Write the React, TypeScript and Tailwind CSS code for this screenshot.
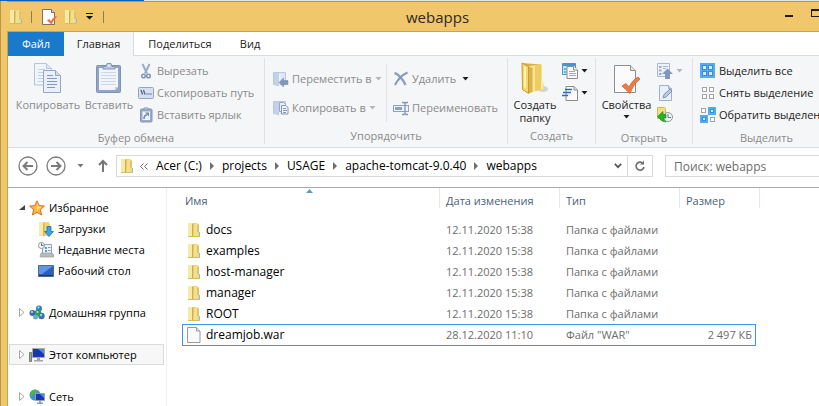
import type { ReactNode } from "react";

function Caret({ className = "text-[#1e1e1e]" }: { className?: string }) {
  return (
    <svg width="7" height="4" viewBox="0 0 7 4" className={`shrink-0 ${className}`} aria-hidden="true">
      <path d="M.5 0h6L3.500 3.500z" fill="currentColor" />
    </svg>
  );
}

function FolderIcon({ className = "" }: { className?: string }) {
  return (
    <svg width="14" height="16" viewBox="0 0 14 16" className={`shrink-0 ${className}`} aria-hidden="true">
      <path d="M1 1h9.500v1.500H12V10h1v5H1z" fill="#ecd681" />
      <path d="M1 1h4v13.500H1z" fill="#f7eaa6" />
      <path d="M5 1.500h2.500L6.500 15H5z" fill="#e3c765" />
      <path d="M7 2h3.500v12H6.500z" fill="#f1df92" />
      <path d="M10 2.500h2V10h-2z" fill="#e0c366" />
      <path d="M5.500 2v13" stroke="#cfae4a" />
      <path d="M12.500 10v4" stroke="#7fc0e0" />
      <path d="M1 14.500h11.500" stroke="#d8bb5c" />
    </svg>
  );
}

function CopyIcon() {
  return (
    <svg width="28" height="32" viewBox="0 0 28 32" aria-hidden="true">
      <g fill="#f0f4fb" stroke="#b6c4de">
        <path d="M.5 1.500h12l5 5v16.500H.5z" />
        <path d="M12.500 1.500v5h5" fill="#dbe5f4" />
      </g>
      <path d="M4 7.500h7M4 10.500h8M4 13.500h5M4 16.500h5M4 19.500h5" stroke="#c5d1e5" />
      <g fill="#eaf0fa" stroke="#94a7cb">
        <path d="M9.500 8.500h12l5 5v17h-17z" />
        <path d="M21.500 8.500v5h5" fill="#cedbf0" />
      </g>
      <path d="M13 13.500h6M13 16.500h10M13 19.500h10M13 22.500h10M13 25.500h8" stroke="#8398c0" />
    </svg>
  );
}

function PasteIcon() {
  return (
    <svg width="26" height="32" viewBox="0 0 26 32" aria-hidden="true">
      <rect x=".5" y="3.500" width="24" height="27" rx="1" fill="#93a5c5" stroke="#8092b3" />
      <path d="M3 6h19v19l-3 3H3z" fill="#f0f4fb" />
      <path d="M19 28v-3h3z" fill="#c2cee3" />
      <path d="M5 10.500h15M5 13.500h15M5 16.500h15M5 19.500h15M5 22.500h15" stroke="#cbd6e8" />
      <path d="M7 7V4.500h3l1-3h4l1 3h3V7z" fill="#bdcae0" stroke="#8295b8" />
      <circle cx="13" cy="3.500" r="1" fill="#f5f6f7" />
    </svg>
  );
}

function CutIcon() {
  return (
    <svg width="16" height="16" viewBox="0 0 16 16" fill="none" aria-hidden="true">
      <path d="M4.500 1l4.500 9.500M11.500 1L7 10.500" stroke="#9bacc9" strokeWidth="2" />
      <circle cx="5.500" cy="13" r="1.800" stroke="#8196bb" strokeWidth="1.500" />
      <circle cx="10.500" cy="13" r="1.800" stroke="#8196bb" strokeWidth="1.500" />
    </svg>
  );
}

function PathIcon() {
  return (
    <svg width="16" height="16" viewBox="0 0 16 16" aria-hidden="true">
      <rect x=".5" y="2.500" width="15" height="11" rx="1" fill="#d6e0ef" stroke="#93a5c5" />
      <path d="M3 5l1.500 4.500M5.500 5L7 9.500" stroke="#50668f" strokeWidth="1.300" />
      <path d="M8.500 9h1M10.500 9h1M12.500 9h1" stroke="#50668f" strokeWidth="1.500" />
    </svg>
  );
}

function ShortcutIcon() {
  return (
    <svg width="16" height="16" viewBox="0 0 16 16" aria-hidden="true">
      <rect x="2.500" y="2" width="11.500" height="13" rx="1" fill="#9aabc8" stroke="#8496b8" />
      <path d="M6 3V1h4v2z" fill="#cbd6e8" stroke="#8496b8" />
      <path d="M4.500 4.500h7.500v8.500H4.500z" fill="#f0f4fb" />
      <path d="M6 12c0-2.500 1-4 3-4" stroke="#7087b2" strokeWidth="1.600" fill="none" />
      <path d="M7 5.500h4v4z" fill="#7087b2" />
    </svg>
  );
}

function PaleFolder() {
  return (
    <>
      <path d="M.5 1.500h12v12H.5z" fill="#dde6f3" stroke="#b8c7de" />
      <path d="M1 1.500l5 1v13l-5-1.500z" fill="#c3d0e5" />
      <path d="M6 3h1.500v12H6z" fill="#edf2fa" />
    </>
  );
}

function MoveToIcon() {
  return (
    <svg width="16" height="16" viewBox="0 0 16 16" aria-hidden="true">
      <PaleFolder />
      <path d="M6 11.500L10.500 7v2.500H15v4h-4.500V16z" fill="#8196bb" stroke="#7087b2" strokeWidth=".5" />
    </svg>
  );
}

function CopyToIcon() {
  return (
    <svg width="16" height="16" viewBox="0 0 16 16" aria-hidden="true">
      <PaleFolder />
      <path d="M6.500 2.500h4l2 2v7h-6z" fill="#eaf0fa" stroke="#94a7cb" />
      <path d="M8.500 5.500h4l2.500 2v6.500H8.500z" fill="#f0f4fb" stroke="#8398c0" />
      <path d="M10 8.500h3M10 10.500h4M10 12.500h3" stroke="#8398c0" />
    </svg>
  );
}

function DeleteIcon() {
  return (
    <svg width="16" height="16" viewBox="0 0 16 16" fill="none" aria-hidden="true">
      <path d="M1.500 2C5 3 10 8 12.500 14" stroke="#8fa2c3" strokeWidth="2.500" />
      <path d="M14.500 1.500C9 4 5 8 2 14" stroke="#8398bd" strokeWidth="2" />
    </svg>
  );
}

function RenameIcon() {
  return (
    <svg width="16" height="16" viewBox="0 0 16 16" fill="none" aria-hidden="true">
      <rect x=".5" y="5.500" width="15" height="6" fill="#edf2fa" stroke="#8ea1c3" />
      <path d="M2 7h7v3H2z" fill="#8ea1c3" />
      <path d="M9 2.500h2l1 1 1-1h2M9 14.500h2l1-1 1 1h2M12 3v11" stroke="#8196bb" strokeWidth="1.300" />
    </svg>
  );
}

function NewFolderIcon() {
  return (
    <svg width="28" height="32" viewBox="0 0 28 32" aria-hidden="true">
      <ellipse cx="22" cy="27" rx="5" ry="3" fill="#d0d1d3" />
      <path d="M1 1l19 1.500V25H7z" fill="#d9b045" />
      <path d="M8 4l12.500-1.500V21l2 1.500V27L8 31z" fill="#f8e593" />
      <path d="M14 3.300l6.500-.8V21l2 1.500V27L14 29.300z" fill="#edcd62" />
      <path d="M1 1l6.500 3.500V31.500l-6-4z" fill="#f4d76d" stroke="#c79b36" />
      <path d="M8 4.500l3.500 1.500v24L8 31.500z" fill="#dcb348" />
      <path d="M20 19h2.500v8l-2.500.7z" fill="#f9eba7" />
      <path d="M3 4l2 1.200v21L3 25z" fill="#fff3b0" />
    </svg>
  );
}

function NewItemIcon() {
  return (
    <svg width="16" height="16" viewBox="0 0 16 16" aria-hidden="true">
      <path d="M.5.500h13v11H.5z" fill="#c9e5f5" stroke="#3f9bc9" />
      <path d="M1 1h12v2H1z" fill="#3f9bc9" />
      <path d="M2 5h2.500v2H2zM2 8h2.500v2H2z" fill="#70b8dc" />
      <path d="M5 3.500h6.500l4 3.500v8.500H5z" fill="#fafafa" stroke="#8c8c8c" />
      <path d="M7 8.500h6M7 10.500h7M7 12.500h7" stroke="#aaa" />
      <path d="M11.500 3.500V7h4" fill="#fff" stroke="#8c8c8c" />
    </svg>
  );
}

function EasyAccessIcon() {
  return (
    <svg width="16" height="16" viewBox="0 0 16 16" aria-hidden="true">
      <path d="M4 1.500h8l3.500 3.500v10.500H4z" fill="#fafafa" stroke="#8c8c8c" />
      <path d="M12 1.500V5h3.500" fill="#ddd" stroke="#8c8c8c" />
      <path d="M3 4.500h7M1 7.500h8M0 10.500h6" stroke="#256fc1" strokeWidth="1.500" />
    </svg>
  );
}

function PropertiesIcon() {
  return (
    <svg width="28" height="32" viewBox="0 0 28 32" aria-hidden="true">
      <path d="M1.500 3.500h16l5 5v22h-21z" fill="#fbfbfb" stroke="#8f8f8f" />
      <path d="M17.500 3.500v5h5" fill="#e4e4e4" stroke="#8f8f8f" />
      <path d="M9 24l4-2.500 3 3.500c2-4 5-8 9-10l2 2c-5 4-8 9-10 14.500z" fill="#f17b43" stroke="#c7592c" strokeWidth=".7" />
    </svg>
  );
}

function SmallPropertiesIcon() {
  return (
    <svg width="16" height="16" viewBox="0 0 16 16" className="shrink-0" aria-hidden="true">
      <path d="M.5.500h9l3 3v12H.5z" fill="#fcfcfc" stroke="#77716a" />
      <path d="M9.500.500v3h3" fill="#ddd" stroke="#77716a" />
      <path d="M5 11.500l2-1.500 2 2c1.500-2.500 3-4 5-5l1 1c-2.500 2-4 4-5.500 7.500z" fill="#ee7043" />
    </svg>
  );
}

function OpenIcon() {
  return (
    <svg width="16" height="16" viewBox="0 0 16 16" aria-hidden="true">
      <path d="M.5.500h12v13H.5z" fill="#edf2fa" stroke="#aab8d0" />
      <path d="M2 3h2.500v2H2zM2 6.500h2.500v2H2zM2 10h2.500v2H2z" fill="#9bacc9" />
      <path d="M6 3.500h5M6 5.500h3" stroke="#a9b8d1" />
      <path d="M10.500 5.500L16 11h-3v5H8v-5H5z" fill="#8196bb" />
    </svg>
  );
}

function EditIcon() {
  return (
    <svg width="16" height="16" viewBox="0 0 16 16" aria-hidden="true">
      <path d="M2.500.500h9l3 3v12h-12z" fill="#e9f0fa" stroke="#9fb0cd" />
      <path d="M11.500.500v3h3" fill="#d0dced" stroke="#9fb0cd" />
      <path d="M6 13l1-3.500L13 4l2 2-6 6z" fill="#bccae1" stroke="#7f94ba" />
    </svg>
  );
}

function HistoryIcon() {
  return (
    <svg width="16" height="16" viewBox="0 0 16 16" aria-hidden="true">
      <path d="M.5.500h7l1 1v10h-8z" fill="#f5df83" stroke="#d3b75b" />
      <circle cx="11" cy="10" r="4.500" fill="#f2f5f7" stroke="#8897a5" />
      <path d="M11 7v3.500h3" fill="none" stroke="#657685" />
      <path d="M.5 9.500L6 4.500v3h3v3.500H6.500c0 1.500 1 3 2.500 4-3-.5-4.500-1-5-2z" fill="#23b525" stroke="#148418" strokeWidth=".6" />
    </svg>
  );
}

function Square({ x, y, on, s = 5 }: { x: number; y: number; on?: boolean; s?: number }) {
  return <rect x={x + 0.5} y={y + 0.5} width={s - 1} height={s - 1} fill={on ? "#d8ecff" : "#fff"} stroke={on ? "#2f90ea" : "#a3a3a3"} />;
}

function SelectAllIcon() {
  return (
    <svg width="16" height="16" viewBox="0 0 16 16" aria-hidden="true">
      <path d="M0 0h15v15H0z" fill="#55aaf7" />
      <Square x={2} y={2} on /><Square x={8} y={2} on /><Square x={2} y={8} on /><Square x={8} y={8} on />
    </svg>
  );
}

function SelectNoneIcon() {
  return (
    <svg width="16" height="16" viewBox="0 0 16 16" aria-hidden="true">
      <Square x={2} y={2} /><Square x={9} y={2} /><Square x={2} y={9} /><Square x={9} y={9} />
    </svg>
  );
}

function InvertIcon() {
  return (
    <svg width="16" height="16" viewBox="0 0 16 16" aria-hidden="true">
      <path d="M8 0h8v8H8zM0 8h8v8H0z" fill="#55aaf7" />
      <Square x={1} y={1} /><Square x={10} y={10} />
      <Square x={10} y={2} s={4} on /><Square x={2} y={10} s={4} on />
    </svg>
  );
}

function StarIcon() {
  return (
    <svg width="16" height="16" viewBox="0 0 16 16" aria-hidden="true">
      <path d="M8 .8l2.200 4.800 5.200.500-4 3.600 1.200 5.300L8 12.300 3.400 15l1.200-5.300-4-3.600 5.200-.5z" fill="#fcb83c" stroke="#dc6b25" />
      <path d="M8 3l1.500 3.500 3 .5-3 2-1.500 2z" fill="#ffe17c" />
    </svg>
  );
}

function DownloadsIcon() {
  return (
    <svg width="16" height="16" viewBox="0 0 16 16" aria-hidden="true">
      <path d="M1 1h10v1.500h1V15H1z" fill="#edd77b" />
      <path d="M1 1h4v13.500H1z" fill="#f8ebab" />
      <path d="M5 2h1.500v13H5z" fill="#d8b850" />
      <path d="M9 5.500h4v5h2.500L11 15.500 6.500 10.500H9z" fill="#3da2e4" stroke="#1670b4" strokeWidth=".8" />
    </svg>
  );
}

function RecentIcon() {
  return (
    <svg width="16" height="16" viewBox="0 0 16 16" aria-hidden="true">
      <path d="M4.500 2.500h9v9h-9z" fill="#eef3f6" stroke="#97a3ab" />
      <path d="M7 5h2v2H7zM7 8h2v2H7z" fill="#5b9bc4" />
      <path d="M10 5.500h2.500M10 8.500h2.500" stroke="#8796a0" />
      <path d="M3 11h11l2 2v2H2z" fill="#b4bcc1" stroke="#89939a" strokeWidth=".6" />
      <circle cx="3.500" cy="3.500" r="3" fill="#f8f8f8" stroke="#8b979f" />
      <path d="M3.500 1.500v2h2" fill="none" stroke="#52616b" />
    </svg>
  );
}

function DesktopIcon() {
  return (
    <svg width="16" height="16" viewBox="0 0 16 16" aria-hidden="true">
      <path d="M.5 2.500h15v11H.5z" fill="#2860bb" stroke="#506b88" />
      <path d="M1 3h14L4 11H1z" fill="#5e96e4" />
      <path d="M1 12.500h14" stroke="#24384f" />
    </svg>
  );
}

function HomeGroupIcon() {
  return (
    <svg width="16" height="16" viewBox="0 0 16 16" aria-hidden="true">
      <circle cx="10" cy="3.500" r="3" fill="#3182ba" />
      <circle cx="3.500" cy="8" r="3" fill="#3b65ba" />
      <circle cx="12.500" cy="11" r="3.200" fill="#3f72be" />
      <circle cx="9" cy="8" r="3.300" fill="#2b9a54" />
      <circle cx="6.500" cy="12" r="2.500" fill="#6caac9" />
      <g fill="#c5e1f3">
        <circle cx="9.500" cy="2.500" r="1" /><circle cx="3" cy="7" r="1" /><circle cx="8.500" cy="7" r="1" /><circle cx="12" cy="10" r="1" />
      </g>
    </svg>
  );
}

function ComputerIcon() {
  return (
    <svg width="16" height="16" viewBox="0 0 16 16" aria-hidden="true">
      <path d="M.5 5.500h2v9h-2z" fill="#9aa98d" stroke="#758079" />
      <path d="M3.500 1.500h12v9h-12z" fill="#1836b0" stroke="#a4aaae" />
      <path d="M9 2h6v5z" fill="#5a83e8" />
      <path d="M8 11h3v2h3v1.500H5V13h3z" fill="#9fa6aa" />
    </svg>
  );
}

function NetworkIcon() {
  return (
    <svg width="16" height="16" viewBox="0 0 16 16" aria-hidden="true">
      <circle cx="6" cy="6" r="5.500" fill="#3f92d0" />
      <path d="M2 2.500C4 .5 7 0 9 1.500L7 4 4 5 3 8 1 7z" fill="#51b649" />
      <path d="M6.500 4.500h9v7h-9z" fill="#1836b0" stroke="#8ba2b4" />
      <path d="M11 5h4v4z" fill="#5a83e8" />
      <path d="M10 12h2v1.500h2V15H8v-1.500h2z" fill="#929da5" />
    </svg>
  );
}

function FileIcon() {
  return (
    <svg width="14" height="16" viewBox="0 0 14 16" className="shrink-0" aria-hidden="true">
      <path d="M.5.500h9l3.500 3.500v11.500H.5z" fill="#f9f9f9" stroke="#9a9a9a" />
      <path d="M9.500.500V4H13" fill="#e4e4e4" stroke="#9a9a9a" />
    </svg>
  );
}

function Group({ label, width, children }: { label: string; width: string; children: ReactNode }) {
  return (
    <section aria-label={label} className={`flex h-[86px] shrink-0 flex-col border-r border-[#dfe1e4] pt-[2px] ${width}`}>
      <div className="h-[66px]"><div className="flex">{children}</div></div>
      <div className="pt-1 text-center leading-4 text-[#8b8b8b]">{label}</div>
    </section>
  );
}

function BigButton({ icon, label, width, disabled, caret }: { icon: ReactNode; label: string; width: string; disabled?: boolean; caret?: boolean }) {
  return (
    <button type="button" disabled={disabled} className={`flex shrink-0 flex-col items-center pt-[2px] leading-[13px] disabled:text-[#8b8b8b] ${width}`}>
      {icon}
      <span className="mt-1">{label}</span>
      {caret && <Caret className="mt-1" />}
    </button>
  );
}

function SmallButton({ icon, label, disabled, caret, caretClass, tall }: { icon: ReactNode; label?: string; disabled?: boolean; caret?: boolean; caretClass?: string; tall?: boolean }) {
  return (
    <button type="button" disabled={disabled} className={`flex items-center gap-[3px] whitespace-nowrap disabled:text-[#8b8b8b] ${tall ? "h-[29px]" : "h-[22px]"}`}>
      {icon}
      {label && <span>{label}</span>}
      {caret && <Caret className={caretClass} />}
    </button>
  );
}

function TreeItem({ icon, label, state, child, selected }: { icon: ReactNode; label: string; state?: "open" | "closed"; child?: boolean; selected?: boolean }) {
  return (
    <li>
      <a href="#" className={`flex h-[21px] items-center gap-[4px] border ${child ? "pl-7" : "pl-[9px]"} ${selected ? "border-[#dadada] bg-[#f7f7f7]" : "border-transparent"}`}>
        {!child && (
          <svg width="6" height="9" viewBox="0 0 6 9" aria-hidden="true">
            {state === "open" ? <path d="M6 2v5H0z" fill="#404040" /> : <path d="M.5.500v8l4.500-4z" fill="#fff" stroke="#a6a6a6" />}
          </svg>
        )}
        {icon}
        <span className="whitespace-nowrap">{label}</span>
      </a>
    </li>
  );
}

const rows = [
  { name: "docs", date: "12.11.2020 15:38", type: "Папка с файлами", size: "" },
  { name: "examples", date: "12.11.2020 15:38", type: "Папка с файлами", size: "" },
  { name: "host-manager", date: "12.11.2020 15:38", type: "Папка с файлами", size: "" },
  { name: "manager", date: "12.11.2020 15:38", type: "Папка с файлами", size: "" },
  { name: "ROOT", date: "12.11.2020 15:38", type: "Папка с файлами", size: "" },
  { name: "dreamjob.war", date: "28.12.2020 11:10", type: 'Файл "WAR"', size: "2 497 КБ" },
];

const crumbs = ["Acer (C:)", "projects", "USAGE", "apache-tomcat-9.0.40", "webapps"];

function TitleBar() {
  return (
    <header className="flex h-[30px] shrink-0 items-center border-t border-[#b8974c] bg-[#f0c76a]">
      <div className="flex w-[102px] shrink-0 items-center pl-[2px]">
        <FolderIcon />
        <span className="ml-2 h-3 w-px bg-[#8f7b4c]" />
        <button type="button" aria-label="Свойства" className="ml-[10px]"><SmallPropertiesIcon /></button>
        <button type="button" aria-label="Новая папка" className="ml-[6px]"><FolderIcon /></button>
        <button type="button" aria-label="Настройка панели" className="ml-2">
          <svg width="8" height="8" viewBox="0 0 8 8" aria-hidden="true"><path d="M0 0h7v1H0zM0 3h7L3.500 6.500z" fill="#111" /></svg>
        </button>
        <span className="ml-[9px] h-3 w-px bg-[#8f7b4c]" />
      </div>
      <h1 className="flex-1 text-center text-[15px] leading-5 text-[#2f2a1f]">webapps</h1>
      <div className="flex w-[53px] shrink-0 justify-between pl-[19px]">
        <button type="button" aria-label="Свернуть">
          <svg width="8" height="16" viewBox="0 0 8 16" aria-hidden="true"><path d="M0 6h8v2H0z" fill="#1c1c1c" /></svg>
        </button>
        <button type="button" aria-label="Развернуть">
          <svg width="8" height="16" viewBox="0 0 8 16" aria-hidden="true"><path d="M8 0H0v8h8V7H1V2h7z" fill="#1c1c1c" /></svg>
        </button>
      </div>
    </header>
  );
}

function Ribbon() {
  return (
    <div className="flex h-[92px] shrink-0 overflow-hidden border-b border-[#d8dbdf] bg-[#f5f6f7] pt-[2px] text-[#1e1e1e]">
      <Group label="Буфер обмена" width="w-[257px]">
        <BigButton icon={<CopyIcon />} label="Копировать" width="w-[80px]" disabled />
        <BigButton icon={<PasteIcon />} label="Вставить" width="w-[42px]" disabled />
        <div className="ml-2">
          <SmallButton icon={<CutIcon />} label="Вырезать" disabled />
          <SmallButton icon={<PathIcon />} label="Скопировать путь" disabled />
          <SmallButton icon={<ShortcutIcon />} label="Вставить ярлык" disabled />
        </div>
      </Group>
      <Group label="Упорядочить" width="w-[243px]">
        <div className="ml-2 mt-1 w-[114px] border-r border-[#dfe1e4]">
          <SmallButton icon={<MoveToIcon />} label="Переместить в" disabled caret caretClass="text-[#b5b5b5]" tall />
          <SmallButton icon={<CopyToIcon />} label="Копировать в" disabled caret caretClass="text-[#b5b5b5]" tall />
        </div>
        <div className="ml-[6px] mt-1">
          <button type="button" className="flex h-[29px] items-center gap-[3px] text-[#8b8b8b]">
            <DeleteIcon />
            <span className="mr-[3px]">Удалить</span>
            <Caret />
          </button>
          <SmallButton icon={<RenameIcon />} label="Переименовать" disabled tall />
        </div>
      </Group>
      <Group label="Создать" width="w-[88px]">
        <BigButton icon={<NewFolderIcon />} label="Создать папку" width="w-[54px]" />
        <div>
          <SmallButton icon={<NewItemIcon />} caret />
          <SmallButton icon={<EasyAccessIcon />} caret />
        </div>
      </Group>
      <Group label="Открыть" width="w-[97px]">
        <BigButton icon={<PropertiesIcon />} label="Свойства" width="w-[61px]" caret />
        <div>
          <SmallButton icon={<OpenIcon />} disabled caret caretClass="text-[#b5b5b5]" />
          <SmallButton icon={<EditIcon />} disabled />
          <SmallButton icon={<HistoryIcon />} />
        </div>
      </Group>
      <Group label="Выделить" width="w-[148px]">
        <div className="ml-[7px]">
          <SmallButton icon={<SelectAllIcon />} label="Выделить все" />
          <SmallButton icon={<SelectNoneIcon />} label="Снять выделение" />
          <SmallButton icon={<InvertIcon />} label="Обратить выделение" />
        </div>
      </Group>
    </div>
  );
}

function NavArrow({ back }: { back?: boolean }) {
  return (
    <svg width="20" height="20" viewBox="0 0 20 20" fill="none" stroke="#7b7b7b" aria-hidden="true">
      <circle cx="10" cy="10" r="9" strokeWidth="1.300" />
      {back ? <path d="M15 10H6M9.500 6L5.500 10l4 4" strokeWidth="2" /> : <path d="M5 10h9M10.500 6l4 4-4 4" strokeWidth="2" />}
    </svg>
  );
}

function AddressBar() {
  return (
    <div className="flex h-[40px] shrink-0 items-center border-b border-[#a9a9a9] pb-[3px] pl-[10px]">
      <button type="button" aria-label="Назад"><NavArrow back /></button>
      <button type="button" aria-label="Вперед" className="ml-2"><NavArrow /></button>
      <button type="button" aria-label="Последние расположения" className="ml-[11px]"><Caret className="text-[#777]" /></button>
      <button type="button" aria-label="Вверх" className="ml-[13px]">
        <svg width="12" height="14" viewBox="0 0 12 14" fill="none" stroke="#777" strokeWidth="2" aria-hidden="true"><path d="M6 13V2M2 6l4-4 4 4" /></svg>
      </button>
      <nav aria-label="Адрес" className="ml-[7px] flex h-[22px] min-w-0 flex-1 items-center border border-[#d9d9d9] pl-[3px] text-[12px] text-black">
        <FolderIcon />
        <svg width="8" height="7" viewBox="0 0 8 7" className="ml-[6px] mr-2" fill="none" stroke="#666" aria-hidden="true"><path d="M3.500.500l-3 3 3 3M7.500.500l-3 3 3 3" /></svg>
        {crumbs.map((crumb, i) => (
          <span key={crumb} className="flex items-center">
            {i > 0 && (
              <svg width="4" height="8" viewBox="0 0 4 8" className="mx-2" aria-hidden="true"><path d="M0 0v8l4-4z" fill="#6d6d6d" /></svg>
            )}
            <a href="#" className="whitespace-nowrap">{crumb}</a>
          </span>
        ))}
        <button type="button" aria-label="Предыдущие расположения" className="ml-auto mr-[5px]">
          <svg width="8" height="6" viewBox="0 0 8 6" fill="none" stroke="#555" strokeWidth="1.700" aria-hidden="true"><path d="M.8.800L4 4.200 7.200.800" /></svg>
        </button>
        <button type="button" aria-label="Обновить" className="flex h-full w-[25px] shrink-0 items-center justify-center border-l border-[#d9d9d9]">
          <svg width="12" height="12" viewBox="0 0 12 12" fill="none" stroke="#707070" strokeWidth="1.700" aria-hidden="true">
            <path d="M9 3.300A4 4 0 1 0 10 7" />
            <path d="M6 4.500h4V.500z" fill="#707070" stroke="none" />
          </svg>
        </button>
      </nav>
      <input type="search" aria-label="Поиск" placeholder="Поиск: webapps" className="ml-3 h-[22px] w-[154px] shrink-0 border border-r-0 border-[#d9d9d9] pl-2 text-[12px] placeholder:text-[#6d6d6d]" />
    </div>
  );
}

function FileList() {
  const head = "h-5 p-0 text-left align-middle font-normal";
  const line = "flex h-5 items-center border-r border-[#e0eaf4] pb-px";
  return (
    <main className="min-w-0 flex-1 pl-[15px]">
      <table className="w-[574px] table-fixed border-collapse">
        <thead className="text-[#4c607a]">
          <tr>
            <th className={`w-[258px] ${head}`}>
              <div className={`relative pl-[3px] pt-[6px] ${line}`}>
                Имя
                <svg width="7" height="4" viewBox="0 0 7 4" className="absolute left-[124px] top-px" aria-hidden="true"><path d="M0 4l3.500-4L7 4z" fill="#5f9dc5" /></svg>
              </div>
            </th>
            <th className={`w-[120px] ${head}`}><div className={`pl-[6px] pt-[6px] ${line}`}>Дата изменения</div></th>
            <th className={`w-[120px] ${head}`}><div className={`pl-[6px] pt-[6px] ${line}`}>Тип</div></th>
            <th className={head}><div className={`w-[80px] pl-[6px] pt-[6px] ${line}`}>Размер</div></th>
          </tr>
        </thead>
        <tbody className="text-[#6d6d6d]">
          <tr className="h-[11px]"><td colSpan={4} className="p-0" /></tr>
          {rows.map((row) => (
            <tr key={row.name} className={row.size ? "h-[22px] outline outline-1 -outline-offset-1 outline-[#3a96f2]" : "h-[21px]"}>
              <td className="p-0">
                <a href="#" className="flex items-center gap-[5px] pl-[5px] text-[12px] leading-5 text-black">
                  {row.size ? <FileIcon /> : <FolderIcon />}
                  {row.name}
                </a>
              </td>
              <td className="p-0 pl-[6px]">{row.date}</td>
              <td className="p-0 pl-[6px]">{row.type}</td>
              <td className="p-0 pr-1 text-right">{row.size}</td>
            </tr>
          ))}
        </tbody>
      </table>
    </main>
  );
}

export default function App() {
  return (
    <div className="flex h-screen flex-col overflow-hidden bg-white font-['Open_Sans','Noto_Sans',sans-serif] text-[11px] leading-4 text-black">
      <div className="flex h-px shrink-0">
        <div className="w-[144px] bg-[#0a62bd]" />
        <div className="flex-1 bg-[#dfe7e2]" />
      </div>
      <div className="flex min-h-0 flex-1 flex-col border-l border-[#b8974c] bg-[#f0c76a] pl-[6px]">
        <TitleBar />
        <div className="flex min-h-0 flex-1 flex-col border-l border-t border-[#c9a350] bg-white">
          <div role="tablist" className="flex h-[24px] shrink-0 items-stretch">
            <button type="button" role="tab" aria-selected="false" className="w-[56px] bg-[#1979ca] text-white">Файл</button>
            <button type="button" role="tab" aria-selected="true" className="w-[70px] border-r border-[#d8dbdf] bg-[#f5f6f7] text-[#222]">Главная</button>
            <button type="button" role="tab" aria-selected="false" className="w-[92px] border-b border-[#d8dbdf] text-[#222]">Поделиться</button>
            <button type="button" role="tab" aria-selected="false" className="w-[48px] border-b border-[#d8dbdf] text-[#222]">Вид</button>
            <div className="flex-1 border-b border-[#d8dbdf]" />
          </div>
          <Ribbon />
          <AddressBar />
          <div className="flex min-h-0 flex-1">
            <aside className="w-[159px] shrink-0 border-r border-[#f0f0f0] pl-px pr-[2px] pt-[9px]">
              <ul className="flex flex-col">
                <TreeItem icon={<StarIcon />} label="Избранное" state="open" />
                <TreeItem icon={<DownloadsIcon />} label="Загрузки" child />
                <TreeItem icon={<RecentIcon />} label="Недавние места" child />
                <TreeItem icon={<DesktopIcon />} label="Рабочий стол" child />
              </ul>
              <ul className="mt-[21px] flex flex-col gap-[21px]">
                <TreeItem icon={<HomeGroupIcon />} label="Домашняя группа" state="closed" />
                <TreeItem icon={<ComputerIcon />} label="Этот компьютер" state="closed" selected />
                <TreeItem icon={<NetworkIcon />} label="Сеть" state="closed" />
              </ul>
            </aside>
            <FileList />
          </div>
        </div>
      </div>
    </div>
  );
}
